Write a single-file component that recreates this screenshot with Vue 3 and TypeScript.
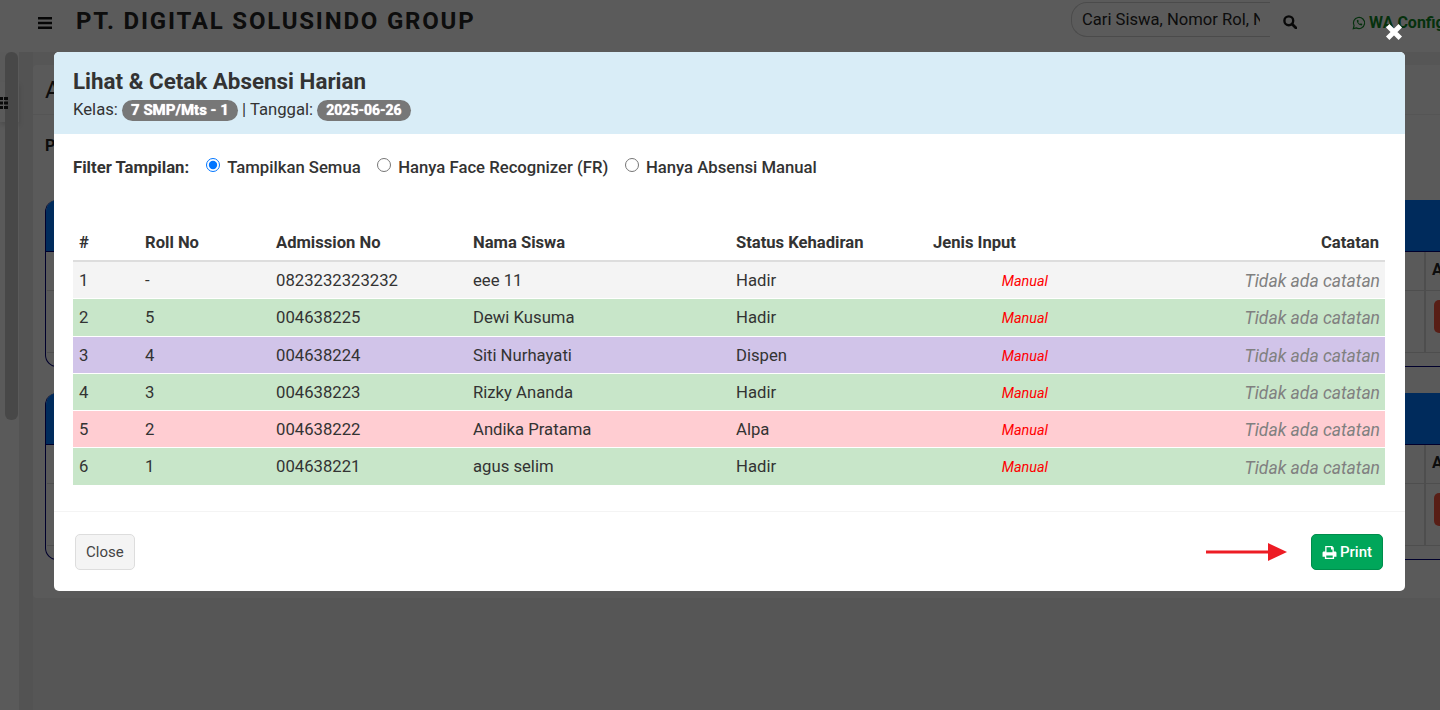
<template>
  <div class="page">
    <!-- page behind the modal -->
    <header class="topbar">
      <svg class="burger" viewBox="0 0 14 12" width="14" height="12"><path d="M0 0h14v2.4H0zM0 4.8h14v2.4H0zM0 9.6h14V12H0z" /></svg>
      <div class="brand">PT. DIGITAL SOLUSINDO GROUP</div>
      <div class="search">
        <input class="search-box" type="text" placeholder="Cari Siswa, Nomor Rol, NIS" />
        <svg class="search-icon" viewBox="0 0 14 14" width="14" height="14">
          <circle cx="5.8" cy="5.8" r="4.4" fill="none" stroke="#151515" stroke-width="2.4" />
          <path d="M9 9l4 4" stroke="#151515" stroke-width="2.8" stroke-linecap="round" />
        </svg>
      </div>
      <div class="wa">
        <svg viewBox="0 0 14 14" width="14" height="14">
          <path d="M1.300 12.700l.8-3a5.600 5.600 0 1 1 2.200 2.200z" fill="none" stroke="#0d7a22" stroke-width="1.200" />
          <path d="M4.800 4.300c0 2.600 2.200 5 5 5.300l.6-1.500-1.600-.8-.7.7c-.9-.4-1.600-1.100-2-2l.7-.7-.7-1.600z" fill="#0d7a22" />
        </svg>
        <b>WA Config</b>
      </div>
    </header>
    <div class="shell">
      <aside class="rail">
        <div class="rail-tab">
          <svg viewBox="0 0 8 12" width="8" height="12"><path d="M0 0h3v3H0zM4 0h4v3H4zM0 4.500h3v3H0zM4 4.500h4v3H4zM0 9h3v3H0zM4 9h4v3H4z" fill="#1a1a1a" /></svg>
        </div>
      </aside>
      <main class="content">
        <section class="card">
          <h2 class="card-title">Absensi</h2>
          <div class="card-body">
            <p class="card-note">Pilih</p>
            <div v-for="panel in 2" :key="panel" class="panel">
              <div class="panel-head"></div>
              <div class="panel-grid">
                <div class="panel-cell"></div>
                <div class="panel-cell panel-label">Aksi</div>
                <div class="panel-cell panel-row"></div>
                <div class="panel-cell panel-row"><span class="panel-btn"></span></div>
              </div>
            </div>
          </div>
        </section>
      </main>
    </div>

    <div class="backdrop"></div>

    <!-- modal -->
    <div class="modal">
      <button class="modal-x" type="button" aria-label="Close">
        <svg viewBox="0 0 20 20" width="18" height="18"><path d="M3 3l14 14M17 3L3 17" stroke="#fff" stroke-width="5.4" /></svg>
      </button>
      <div class="modal-head">
        <h3>Lihat &amp; Cetak Absensi Harian</h3>
        <div class="modal-sub">
          Kelas: <span class="badge">7 SMP/Mts - 1</span> | Tanggal: <span class="badge badge-date">2025-06-26</span>
        </div>
      </div>
      <div class="modal-body">
        <div class="filter">
          <strong>Filter Tampilan:</strong>
          <label v-for="opt in filters" :key="opt.value" class="radio">
            <input v-model="filter" type="radio" name="filter" :value="opt.value" />
            {{ opt.label }}
          </label>
        </div>
        <table class="rows">
          <thead>
            <tr>
              <th class="c-no">#</th>
              <th class="c-roll">Roll No</th>
              <th class="c-adm">Admission No</th>
              <th class="c-name">Nama Siswa</th>
              <th class="c-status">Status Kehadiran</th>
              <th class="c-input">Jenis Input</th>
              <th class="c-note">Catatan</th>
            </tr>
          </thead>
          <tbody>
            <tr v-for="(row, i) in rows" :key="row.adm" :class="row.status.toLowerCase()">
              <td>{{ i + 1 }}</td>
              <td>{{ row.roll }}</td>
              <td>{{ row.adm }}</td>
              <td>{{ row.name }}</td>
              <td>{{ row.status }}</td>
              <td class="manual">Manual</td>
              <td class="note">Tidak ada catatan</td>
            </tr>
          </tbody>
        </table>
      </div>
      <div class="modal-foot">
        <button class="btn btn-close" type="button">Close</button>
        <div class="foot-right">
          <svg class="arrow" viewBox="0 0 81 18" width="81" height="18"><path d="M0 7.500h62v3H0z" fill="#ed1c24" /><path d="M62 0l19 9-19 9z" fill="#ed1c24" /></svg>
          <button class="btn btn-print" type="button">
            <svg viewBox="0 0 14 14" width="15" height="15"><path fill-rule="evenodd" d="M3 1h6.500L11 2.500V6h1.200c.7 0 1.300.6 1.300 1.300V11h-2.200v2H2.700v-2H.5V7.300C.5 6.600 1.100 6 1.800 6H3zM4.200 2.100V6.800h5.600V4.200H8.400V2.100zM4 9.800v2.100h6V9.800z" fill="#fff" /></svg>
            Print
          </button>
        </div>
      </div>
    </div>
  </div>
</template>

<script setup lang="ts">
import { ref } from 'vue'

interface Row {
  roll: string
  adm: string
  name: string
  status: string
}

const filter = ref('all')

const filters = [
  { value: 'all', label: 'Tampilkan Semua' },
  { value: 'fr', label: 'Hanya Face Recognizer (FR)' },
  { value: 'manual', label: 'Hanya Absensi Manual' },
]

const rows: Row[] = [
  { roll: '-', adm: '0823232323232', name: 'eee 11', status: 'Hadir' },
  { roll: '5', adm: '004638225', name: 'Dewi Kusuma', status: 'Hadir' },
  { roll: '4', adm: '004638224', name: 'Siti Nurhayati', status: 'Dispen' },
  { roll: '3', adm: '004638223', name: 'Rizky Ananda', status: 'Hadir' },
  { roll: '2', adm: '004638222', name: 'Andika Pratama', status: 'Alpa' },
  { roll: '1', adm: '004638221', name: 'agus selim', status: 'Hadir' },
]
</script>

<style>
html,
body {
  margin: 0;
  overflow: hidden;
}
</style>

<style scoped>
.page {
  position: relative;
  width: 1440px;
  height: 710px;
  overflow: hidden;
  background: #d6d6d6;
  font-family: Roboto, "Liberation Sans", sans-serif;
  font-size: 16px;
  color: #333;
}

/* background page */
.topbar {
  height: 52px;
  display: flex;
  align-items: flex-start;
  box-sizing: border-box;
  padding-left: 38px;
  background: #e4e4e4;
}

.burger {
  flex: none;
  margin-top: 17px;
  fill: #111;
}

.brand {
  flex: none;
  margin: 6px 0 0 24px;
  width: 995px;
  font-size: 24px;
  line-height: 30px;
  font-weight: 700;
  letter-spacing: 1.8px;
  color: #222;
}

.search {
  flex: none;
  width: 281px;
  display: flex;
  align-items: flex-start;
}

.search-box {
  box-sizing: border-box;
  width: 199px;
  height: 35px;
  margin-top: 2px;
  padding: 6px 10px;
  border: 1px solid #bbb;
  border-right: 0;
  border-radius: 16px 0 0 16px;
  background: transparent;
  outline: 0;
  font-family: inherit;
  font-size: 16.6px;
}

.search-box::placeholder {
  color: #222;
  opacity: 1;
}

.search-icon {
  margin: 15px 0 0 13px;
}

.wa {
  flex: none;
  display: flex;
  align-items: center;
  gap: 3px;
  margin-top: 14px;
  font-size: 16px;
  line-height: 18px;
  white-space: nowrap;
  color: #0d7a22;
}

.wa b {
  font-weight: 700;
}

.shell {
  display: flex;
  height: 658px;
}

.rail {
  position: relative;
  width: 33px;
  flex: none;
  background: linear-gradient(90deg, #e0e0e0 0 19px, #cfcfcf 19px);
}

.rail::before {
  content: "";
  position: absolute;
  left: 5px;
  top: 0;
  z-index: 1;
  width: 13px;
  height: 368px;
  border-radius: 6px;
  background: #b4b4b4;
}

.rail-tab {
  position: absolute;
  left: 0;
  top: 30px;
  width: 19px;
  height: 40px;
  padding-top: 15px;
  box-sizing: border-box;
  background: #e0e0e0;
  box-shadow: 0 3px 5px rgba(0, 0, 0, 0.15);
}

.rail-tab svg {
  position: relative;
  z-index: 2;
  display: block;
}

.content {
  flex: 1;
  min-width: 0;
  padding-top: 13px;
}

.card {
  width: 1460px;
  height: 533px;
  background: #e2e2e2;
  border-radius: 4px;
  overflow: hidden;
}

.card-title {
  margin: 0;
  height: 50px;
  box-sizing: border-box;
  padding: 10px 12px;
  border-bottom: 1px solid #d4d4d4;
  font-size: 24px;
  line-height: 30px;
  font-weight: 400;
  color: #222;
}

.card-body {
  padding: 0 12px;
}

.card-note {
  margin: 0;
  height: 85px;
  padding-top: 21px;
  box-sizing: border-box;
  font-weight: 700;
  color: #222;
}

.panel {
  height: 167px;
  margin-bottom: 26px;
  box-sizing: border-box;
  border: 1px solid #00006e;
  border-top: 0;
  border-radius: 12px;
  overflow: hidden;
}

.panel-head {
  height: 51px;
  background: #006de6;
  border-bottom: 1px solid #00006e;
}

.panel-grid {
  display: grid;
  grid-template-columns: 1fr 55px;
  grid-template-rows: 38px 62px;
  margin-left: 1px;
  border-bottom: 1px solid #c4c4c4;
}

.panel-cell {
  border-right: 1px solid #c4c4c4;
  box-sizing: border-box;
}

.panel-label {
  padding: 8px 6px;
  border-left: 1px solid #c4c4c4;
  font-weight: 700;
  color: #222;
  border-right: 0;
}

.panel-row {
  border-top: 1px solid #c4c4c4;
}

.panel-row:last-child {
  border-left: 1px solid #c4c4c4;
  border-right: 0;
  padding: 9px 0 0 8px;
}

.panel-btn {
  display: block;
  width: 60px;
  height: 33px;
  border-radius: 5px;
  background: #dd4b39;
}

.backdrop {
  position: absolute;
  inset: 0;
  z-index: 5;
  background: rgba(0, 0, 0, 0.6);
}

/* modal */
.modal {
  position: absolute;
  left: 54px;
  top: 52px;
  z-index: 6;
  width: 1351px;
  height: 539px;
  display: flex;
  flex-direction: column;
  background: #fff;
  border-radius: 5px;
}

.modal-x {
  position: absolute;
  right: 2px;
  top: -29px;
  width: 18px;
  height: 18px;
  padding: 0;
  border: 0;
  background: none;
}

.modal-x svg {
  display: block;
}

.modal-head {
  height: 82px;
  box-sizing: border-box;
  padding: 16px 19px 0;
  background: #d9edf7;
  border-radius: 5px 5px 0 0;
}

.modal-head h3 {
  margin: 0;
  font-size: 22.4px;
  line-height: 26px;
  font-weight: 700;
  color: #333;
}

.modal-sub {
  margin-top: 5px;
  font-size: 16.7px;
  line-height: 22px;
}

.badge {
  display: inline-block;
  padding: 0 9px;
  border-radius: 11px;
  background: #777;
  color: #fff;
  font-size: 15px;
  line-height: 21px;
  font-weight: 700;
  text-shadow: 0 0 1px #fff;
}

.badge-date {
  font-size: 14px;
}

.modal-body {
  flex: 1;
  padding: 22px 20px 0 19px;
}

.filter {
  display: flex;
  align-items: center;
  height: 22px;
  font-size: 16.7px;
  font-weight: 500;
}

.filter strong {
  font-weight: 700;
  margin-right: 17px;
}

.radio {
  display: flex;
  align-items: center;
  margin-right: 16.5px;
  white-space: nowrap;
}

.radio input {
  width: 14px;
  height: 14px;
  margin: -4px 7px 0 0;
}

.rows {
  width: 100%;
  margin-top: 46px;
  border-collapse: collapse;
  table-layout: fixed;
}

.rows th {
  padding: 9px 6px 7px;
  height: 37px;
  box-sizing: border-box;
  border-bottom: 2px solid #ddd;
  text-align: left;
  font-size: 16.6px;
  font-weight: 700;
  line-height: 20px;
}

.rows td {
  padding: 8px 6px 6px;
  font-size: 16.7px;
  line-height: 22.3px;
  border-top: 1px solid #fff;
}

.c-no { width: 66px; }
.c-roll { width: 131px; }
.c-adm { width: 197px; }
.c-name { width: 263px; }
.c-status { width: 197px; }
.c-input { width: 128px; }

.rows .c-note,
.rows .note {
  text-align: right;
}

.rows .note {
  padding: 8px 5px 6px 6px;
  font-size: 17.5px;
  line-height: 22px;
  font-style: italic;
  color: #808080;
}

.rows .manual {
  text-align: right;
  padding: 9px 7px 5px 6px;
  font-size: 14.4px;
  font-style: italic;
  color: #f00;
}

.hadir { background: #c8e6c9; }
.dispen { background: #d1c4e9; }
.alpa { background: #ffcdd2; }
tbody tr:first-child { background: #f4f4f4; }

.modal-foot {
  height: 80px;
  box-sizing: border-box;
  padding: 22px 22px 0 21px;
  display: flex;
  justify-content: space-between;
  align-items: flex-start;
  border-top: 1px solid #f4f4f4;
}

.foot-right {
  display: flex;
  align-items: center;
}

.arrow {
  margin-right: 24px;
}

.btn {
  height: 36px;
  box-sizing: border-box;
  border-radius: 5px;
  font-family: inherit;
  font-size: 15px;
  padding: 0 10px;
}

.btn-close {
  background: #f4f4f4;
  border: 1px solid #ddd;
  color: #444;
}

.btn-print {
  display: flex;
  align-items: center;
  gap: 3px;
  background: #00a65a;
  border: 1px solid #008d4c;
  color: #fff;
  font-weight: 500;
}
</style>
